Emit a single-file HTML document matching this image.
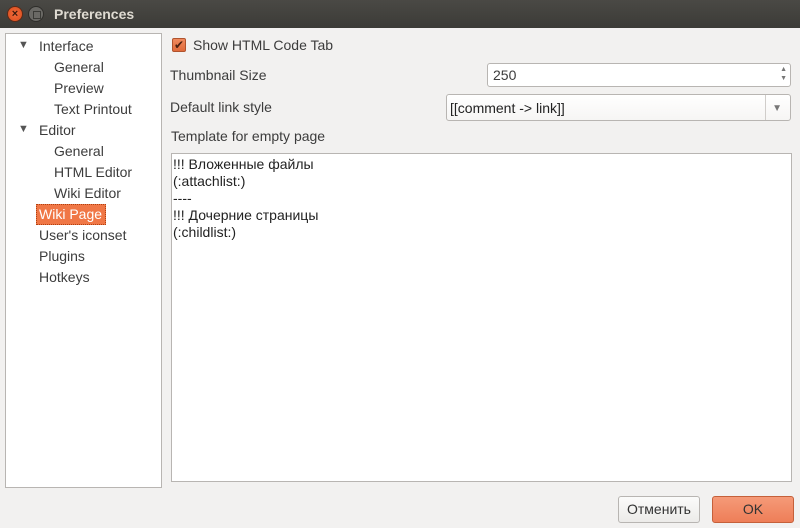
<!DOCTYPE html>
<html><head><style>
body{margin:0;width:800px;height:528px;background:#f2f1f0;font-family:"Liberation Sans","DejaVu Sans",sans-serif;font-size:14px;color:#3c3c3c;position:relative;overflow:hidden}
.abs{position:absolute;white-space:nowrap}
.title{left:0;top:0;width:800px;height:28px;background:linear-gradient(#4a4945,#3c3b37);}
.tree{left:5px;top:33px;width:155px;height:453px;background:#fff;border:1px solid #b8b5b2}
.t{position:absolute;line-height:21px;height:21px}
.input{background:#fff;border:1px solid #b8b5b2;border-radius:3px}
</style></head><body>
<div class="abs title">
 <div class="abs" style="left:7px;top:6px;width:16px;height:16px;border-radius:50%;background:radial-gradient(#f36b3c,#d94d1c);border:1px solid #5a2a18;box-sizing:border-box;color:#3a1a0c;font-size:11px;line-height:14px;text-align:center;font-weight:bold">×</div>
 <div class="abs" style="left:28px;top:6px;width:16px;height:16px;border-radius:50%;background:#6a6965;border:1px solid #2e2d2a;box-sizing:border-box"><div class="abs" style="left:4px;top:4px;width:6px;height:6px;border:1px solid #3a3a36"></div></div>
 <div class="abs" style="left:54px;top:6px;color:#dfdbd2;font-weight:bold;font-size:14px">Preferences</div>
</div>
<div class="abs tree">
 <div class="t" style="left:12px;top:1px;font-size:11px;color:#555">▼</div>
 <div class="t" style="left:33px;top:2px">Interface</div>
 <div class="t" style="left:48px;top:23px">General</div>
 <div class="t" style="left:48px;top:44px">Preview</div>
 <div class="t" style="left:48px;top:65px">Text Printout</div>
 <div class="t" style="left:12px;top:85px;font-size:11px;color:#555">▼</div>
 <div class="t" style="left:33px;top:86px">Editor</div>
 <div class="t" style="left:48px;top:107px">General</div>
 <div class="t" style="left:48px;top:128px">HTML Editor</div>
 <div class="t" style="left:48px;top:149px">Wiki Editor</div>
 <div class="t" style="left:30px;top:170px;width:70px;background:#f07746;color:#fff;padding-left:3px;box-sizing:border-box;outline:1px dotted #b04010;outline-offset:-1px">Wiki Page</div>
 <div class="t" style="left:33px;top:191px">User's iconset</div>
 <div class="t" style="left:33px;top:212px">Plugins</div>
 <div class="t" style="left:33px;top:233px">Hotkeys</div>
</div>
<div class="abs" style="left:172px;top:38px;width:14px;height:14px;border-radius:2px;background:linear-gradient(#f08a5e,#e06a3a);border:1px solid #b0532d;box-sizing:border-box;color:#4a2010;font-size:12px;line-height:12px;text-align:center">✔</div>
<div class="abs" style="left:193px;top:37px">Show HTML Code Tab</div>
<div class="abs" style="left:170px;top:67px">Thumbnail Size</div>
<div class="abs input" style="left:487px;top:63px;width:304px;height:24px;box-sizing:border-box"><span class="abs" style="left:5px;top:3px">250</span><span class="abs" style="right:3px;top:1px;font-size:7px;color:#777;line-height:9px">▲<br>▼</span></div>
<div class="abs" style="left:170px;top:99px">Default link style</div>
<div class="abs input" style="left:446px;top:94px;width:345px;height:27px;box-sizing:border-box;background:linear-gradient(#fff,#f6f5f4)"><span class="abs" style="left:3px;top:5px;color:#222">[[comment -&gt; link]]</span><span class="abs" style="left:318px;top:0;width:1px;height:25px;background:#d0cdca"></span><span class="abs" style="right:8px;top:8px;font-size:10px;color:#777">▼</span></div>
<div class="abs" style="left:171px;top:128px">Template for empty page</div>
<div class="abs" style="left:171px;top:153px;width:621px;height:329px;background:#fff;border:1px solid #b8b5b2;box-sizing:border-box;font-size:14px;line-height:17px;color:#222;padding:2px 0 0 1px;white-space:pre">!!! Вложенные файлы
(:attachlist:)
----
!!! Дочерние страницы
(:childlist:)</div>
<div class="abs" style="left:618px;top:496px;width:82px;height:27px;border:1px solid #b8b5b2;border-radius:3px;box-sizing:border-box;background:linear-gradient(#fbfbfa,#ecebe9);text-align:center;line-height:25px;color:#333">Отменить</div>
<div class="abs" style="left:712px;top:496px;width:82px;height:27px;border:1px solid #c5603a;border-radius:3px;box-sizing:border-box;background:linear-gradient(#f59a78,#ee7e58);text-align:center;line-height:25px;color:#333">OK</div>
</body></html>
